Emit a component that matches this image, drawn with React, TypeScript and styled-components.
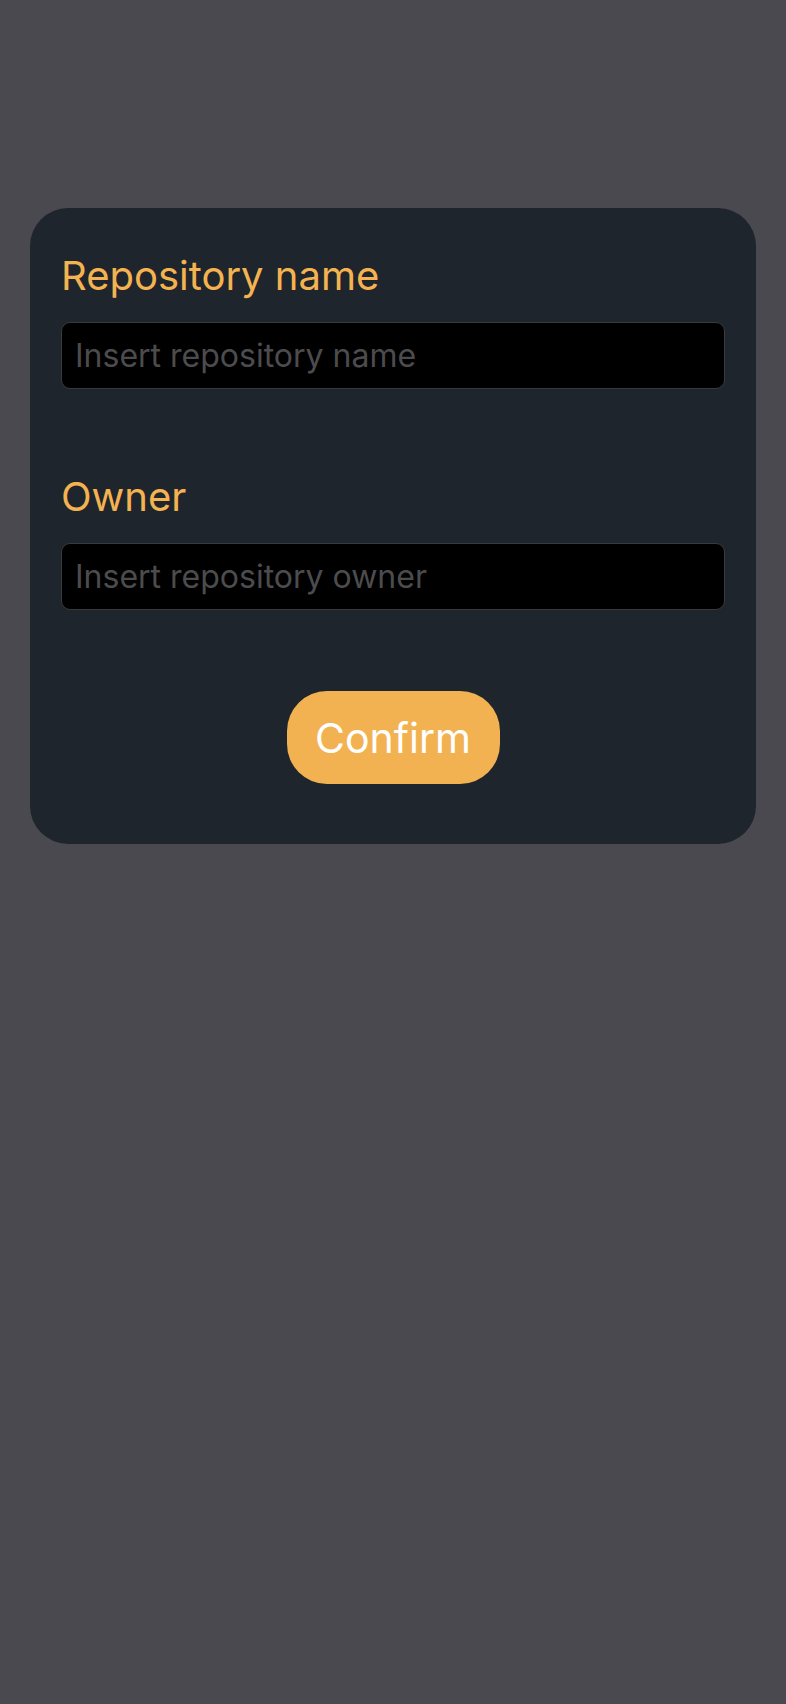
import React from "react";
import styled, { createGlobalStyle } from "styled-components";

const Global = createGlobalStyle`
  html, body { margin: 0; padding: 0; background: #4a494f; }
  body { font-family: Inter, "Noto Sans", sans-serif; min-height: 1704px; }
  * { box-sizing: border-box; }
`;

const Page = styled.div`
  padding: 208px 30px 0 30px;
`;

const Card = styled.form`
  background: #1f252c;
  border-radius: 38px;
  padding: 44px 31px 60px 31px;
  display: flex;
  flex-direction: column;
`;

const Field = styled.div<{ $spaced?: boolean }>`
  display: flex;
  flex-direction: column;
  gap: 22px;
  margin-top: ${(p) => (p.$spaced ? "84px" : "0")};
`;

const Label = styled.label`
  color: #f4b350;
  font-size: 40px;
  line-height: 48px;
  font-weight: 400;
`;

const Input = styled.input`
  height: 67px;
  width: 100%;
  background: #000;
  border: 1px solid #383a3e;
  border-radius: 9px;
  padding: 0 13px;
  font-family: inherit;
  font-size: 32px;
  color: #ddd;
  outline: none;
  &::placeholder { color: #4c4c4e; }
`;

const Actions = styled.div`
  display: flex;
  justify-content: center;
  margin-top: 81px;
`;

const Button = styled.button`
  width: 213px;
  height: 93px;
  border: none;
  border-radius: 40px;
  background: #f3b252;
  color: #fff;
  font-family: inherit;
  font-size: 41px;
  padding: 0;
`;

export default function App() {
  return (
    <>
      <Global />
      <Page>
        <Card onSubmit={(e) => e.preventDefault()}>
          <Field>
            <Label>Repository name</Label>
            <Input placeholder="Insert repository name" />
          </Field>
          <Field $spaced>
            <Label>Owner</Label>
            <Input placeholder="Insert repository owner" />
          </Field>
          <Actions>
            <Button type="submit">Confirm</Button>
          </Actions>
        </Card>
      </Page>
    </>
  );
}
